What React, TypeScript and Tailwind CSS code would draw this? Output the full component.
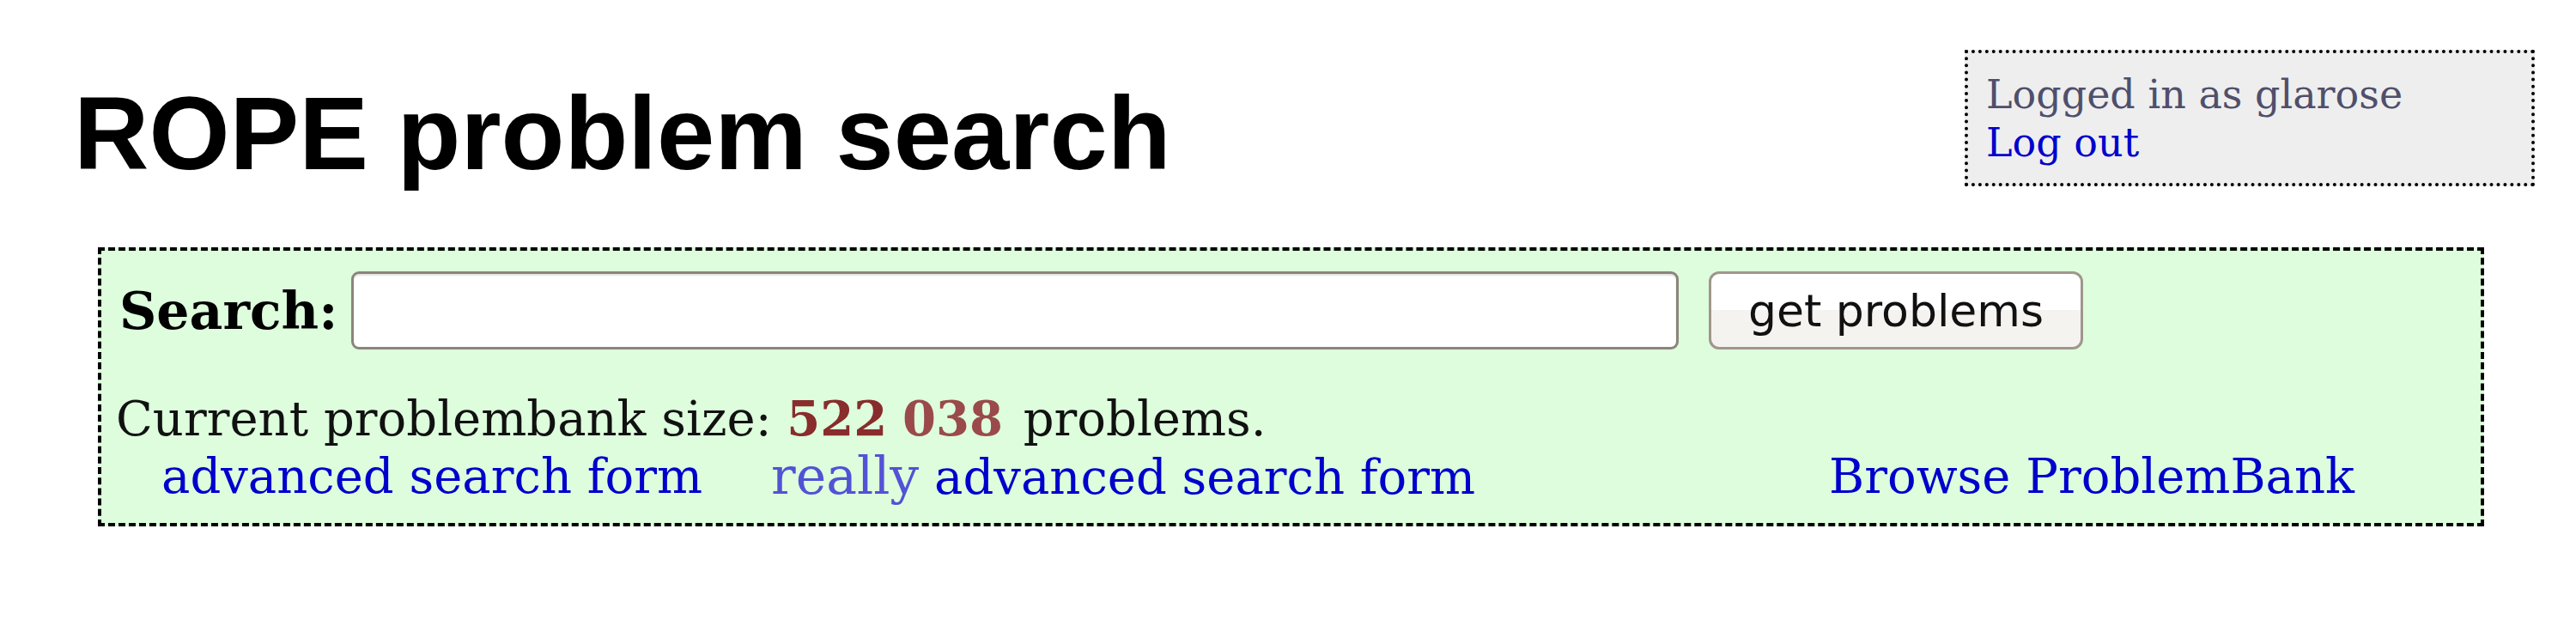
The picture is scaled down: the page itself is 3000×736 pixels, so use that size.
import React from "react";

export default function App() {
  return (
    <div className="w-[3000px] h-[736px] bg-white text-black overflow-hidden">
      <div className="flex items-start justify-between">
        <h1 className="mt-[95px] pl-[86px] font-['Liberation_Sans',Arial,sans-serif] font-bold text-[121px] leading-[120px] text-black whitespace-nowrap">
          ROPE problem search
        </h1>
        <div className="mt-[58px] mr-[48px] w-[664px] h-[159px] box-border border-[4px] border-dotted border-black bg-[#eeeeee] pt-[20px] pl-[21px] font-['DejaVu_Serif',serif] text-[46px] leading-[56px]">
          <div className="text-[#4f4f6c] whitespace-nowrap">Logged in as glarose</div>
          <a className="text-[#0000cc] whitespace-nowrap">Log out</a>
        </div>
      </div>

      <div className="mt-[71px] ml-[114px] w-[2779px] h-[325px] box-border border-[4px] border-dashed border-black bg-[#ddfddd] pt-[24px] pl-[17px] pb-[21px] font-['DejaVu_Serif',serif]">
        <div className="flex items-end h-[91px]">
          <div className="w-[274px] pl-[4px] font-bold text-[60px] leading-normal whitespace-nowrap">
            Search:
          </div>
          <div className="w-[1546px] h-[91px] box-border border-[3px] border-[#8d847b] rounded-[9px] bg-white shadow-[inset_0_2px_2px_rgba(0,0,0,0.12)]" />
          <div className="ml-[35px] w-[436px] h-[91px] box-border border-[3px] border-[#a0968c] rounded-[12px] bg-linear-to-b from-white from-50% to-[#f5f3f0] to-50% flex items-center justify-center font-['DejaVu_Sans',sans-serif] text-[52px] leading-none text-[#111111]">
            get problems
          </div>
        </div>

        <div className="mt-[47px] text-[56px] leading-[67px] whitespace-nowrap text-[#111111]">
          Current problembank size:{" "}
          <b className="text-[#882c2c]">522</b>{" "}
          <b className="text-[#9a4a4a] font-semibold">038</b>
          <span className="ml-[6px]"> problems.</span>
        </div>

        <div className="flex text-[56px] leading-[67px] whitespace-nowrap">
          <div className="ml-[53px] w-[710px]">
            <a className="text-[#0000cc]">advanced search form</a>
          </div>
          <div className="w-[1232px]">
            <a className="text-[#5252d4] text-[60px]">really</a>{" "}
            <a className="text-[#0000cc]">advanced search form</a>
          </div>
          <div>
            <a className="text-[#0000cc]">Browse ProblemBank</a>
          </div>
        </div>
      </div>
    </div>
  );
}
